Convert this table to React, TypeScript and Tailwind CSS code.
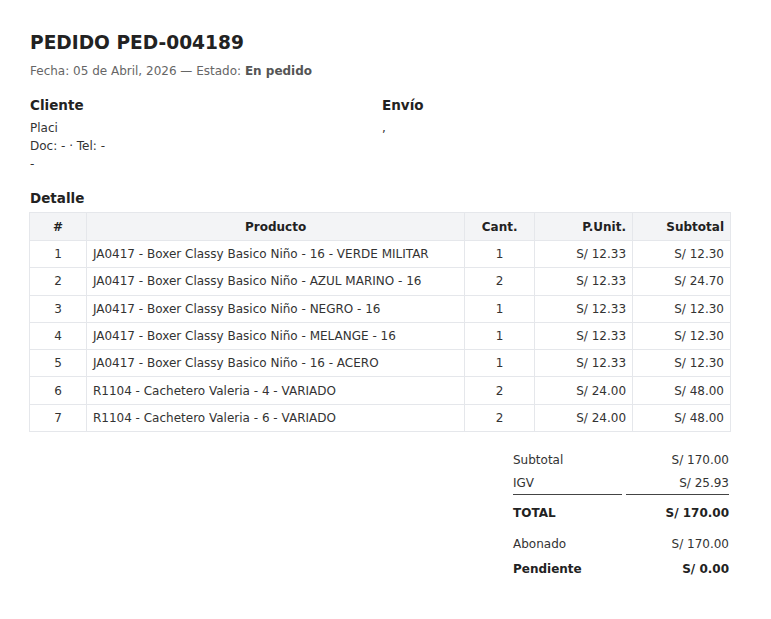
import React from "react";

const rows = [
  ["1", "JA0417 - Boxer Classy Basico Niño - 16 - VERDE MILITAR", "1", "S/ 12.33", "S/ 12.30"],
  ["2", "JA0417 - Boxer Classy Basico Niño - AZUL MARINO - 16", "2", "S/ 12.33", "S/ 24.70"],
  ["3", "JA0417 - Boxer Classy Basico Niño - NEGRO - 16", "1", "S/ 12.33", "S/ 12.30"],
  ["4", "JA0417 - Boxer Classy Basico Niño - MELANGE - 16", "1", "S/ 12.33", "S/ 12.30"],
  ["5", "JA0417 - Boxer Classy Basico Niño - 16 - ACERO", "1", "S/ 12.33", "S/ 12.30"],
  ["6", "R1104 - Cachetero Valeria - 4 - VARIADO", "2", "S/ 24.00", "S/ 48.00"],
  ["7", "R1104 - Cachetero Valeria - 6 - VARIADO", "2", "S/ 24.00", "S/ 48.00"],
];

export default function App() {
  return (
    <div
      className="min-h-[619px] w-[771px] bg-white text-[#333]"
      style={{ fontFamily: '"DejaVu Sans", sans-serif' }}
    >
      <div className="ml-[29px] w-[702px] pt-[30px]">
        <h1 className="pl-[1px] text-[18.6px] font-bold leading-[26px] text-[#222]">PEDIDO PED-004189</h1>
        <p className="mt-[7px] pl-[1px] text-[12px] leading-[16px] text-[#666]">
          Fecha: 05 de Abril, 2026 — Estado: <b className="text-[#555]">En pedido</b>
        </p>

        <div className="mt-[17px] grid grid-cols-[352px_1fr] pl-[1px]">
          <div>
            <h2 className="text-[13.5px] font-bold leading-[18px] text-[#222]">Cliente</h2>
            <div className="mt-[5px] text-[12px] leading-[18px]">
              <div>Placi</div>
              <div>Doc: - · Tel: -</div>
              <div>-</div>
            </div>
          </div>
          <div>
            <h2 className="text-[13.5px] font-bold leading-[18px] text-[#222]">Envío</h2>
            <div className="mt-[5px] text-[12px] leading-[18px]">,</div>
          </div>
        </div>

        <h2 className="mt-[16px] pl-[1px] text-[13.5px] font-bold leading-[18px] text-[#222]">Detalle</h2>

        <table className="mt-[5px] w-[702px] border-collapse text-[12px]">
          <colgroup>
            <col className="w-[57px]" />
            <col className="w-[379px]" />
            <col className="w-[70px]" />
            <col className="w-[98px]" />
            <col className="w-[98px]" />
          </colgroup>
          <thead>
            <tr className="h-[28px] bg-[#f3f4f6] font-bold text-[#222]">
              <th className="border border-[#e5e7eb] px-[6px] text-center">#</th>
              <th className="border border-[#e5e7eb] px-[6px] text-center">Producto</th>
              <th className="border border-[#e5e7eb] px-[6px] text-center">Cant.</th>
              <th className="border border-[#e5e7eb] px-[6px] text-right">P.Unit.</th>
              <th className="border border-[#e5e7eb] px-[6px] text-right">Subtotal</th>
            </tr>
          </thead>
          <tbody>
            {rows.map((r) => (
              <tr key={r[0]} className="h-[27.3px]">
                <td className="border border-[#e5e7eb] px-[6px] text-center">{r[0]}</td>
                <td className="border border-[#e5e7eb] px-[6px] text-left">{r[1]}</td>
                <td className="border border-[#e5e7eb] px-[6px] text-center">{r[2]}</td>
                <td className="border border-[#e5e7eb] px-[6px] text-right">{r[3]}</td>
                <td className="border border-[#e5e7eb] px-[6px] text-right">{r[4]}</td>
              </tr>
            ))}
          </tbody>
        </table>

        <div className="mt-[17px] ml-[484px] w-[216px] text-[12px]">
          <div className="grid grid-cols-[109px_1fr] gap-x-[4px]">
            <div className="leading-[23px]">Subtotal</div>
            <div className="text-right leading-[23px]">S/ 170.00</div>
            <div className="border-b border-[#444] leading-[22px]">IGV</div>
            <div className="border-b border-[#444] text-right leading-[22px]">S/ 25.93</div>
            <div className="pt-[6px] font-bold leading-[24px] text-[#222]">TOTAL</div>
            <div className="pt-[6px] text-right font-bold leading-[24px] text-[#222]">S/ 170.00</div>
            <div className="pt-[7px] leading-[25px]">Abonado</div>
            <div className="pt-[7px] text-right leading-[25px]">S/ 170.00</div>
            <div className="font-bold leading-[25px] text-[#222]">Pendiente</div>
            <div className="text-right font-bold leading-[25px] text-[#222]">S/ 0.00</div>
          </div>
        </div>
      </div>
    </div>
  );
}
